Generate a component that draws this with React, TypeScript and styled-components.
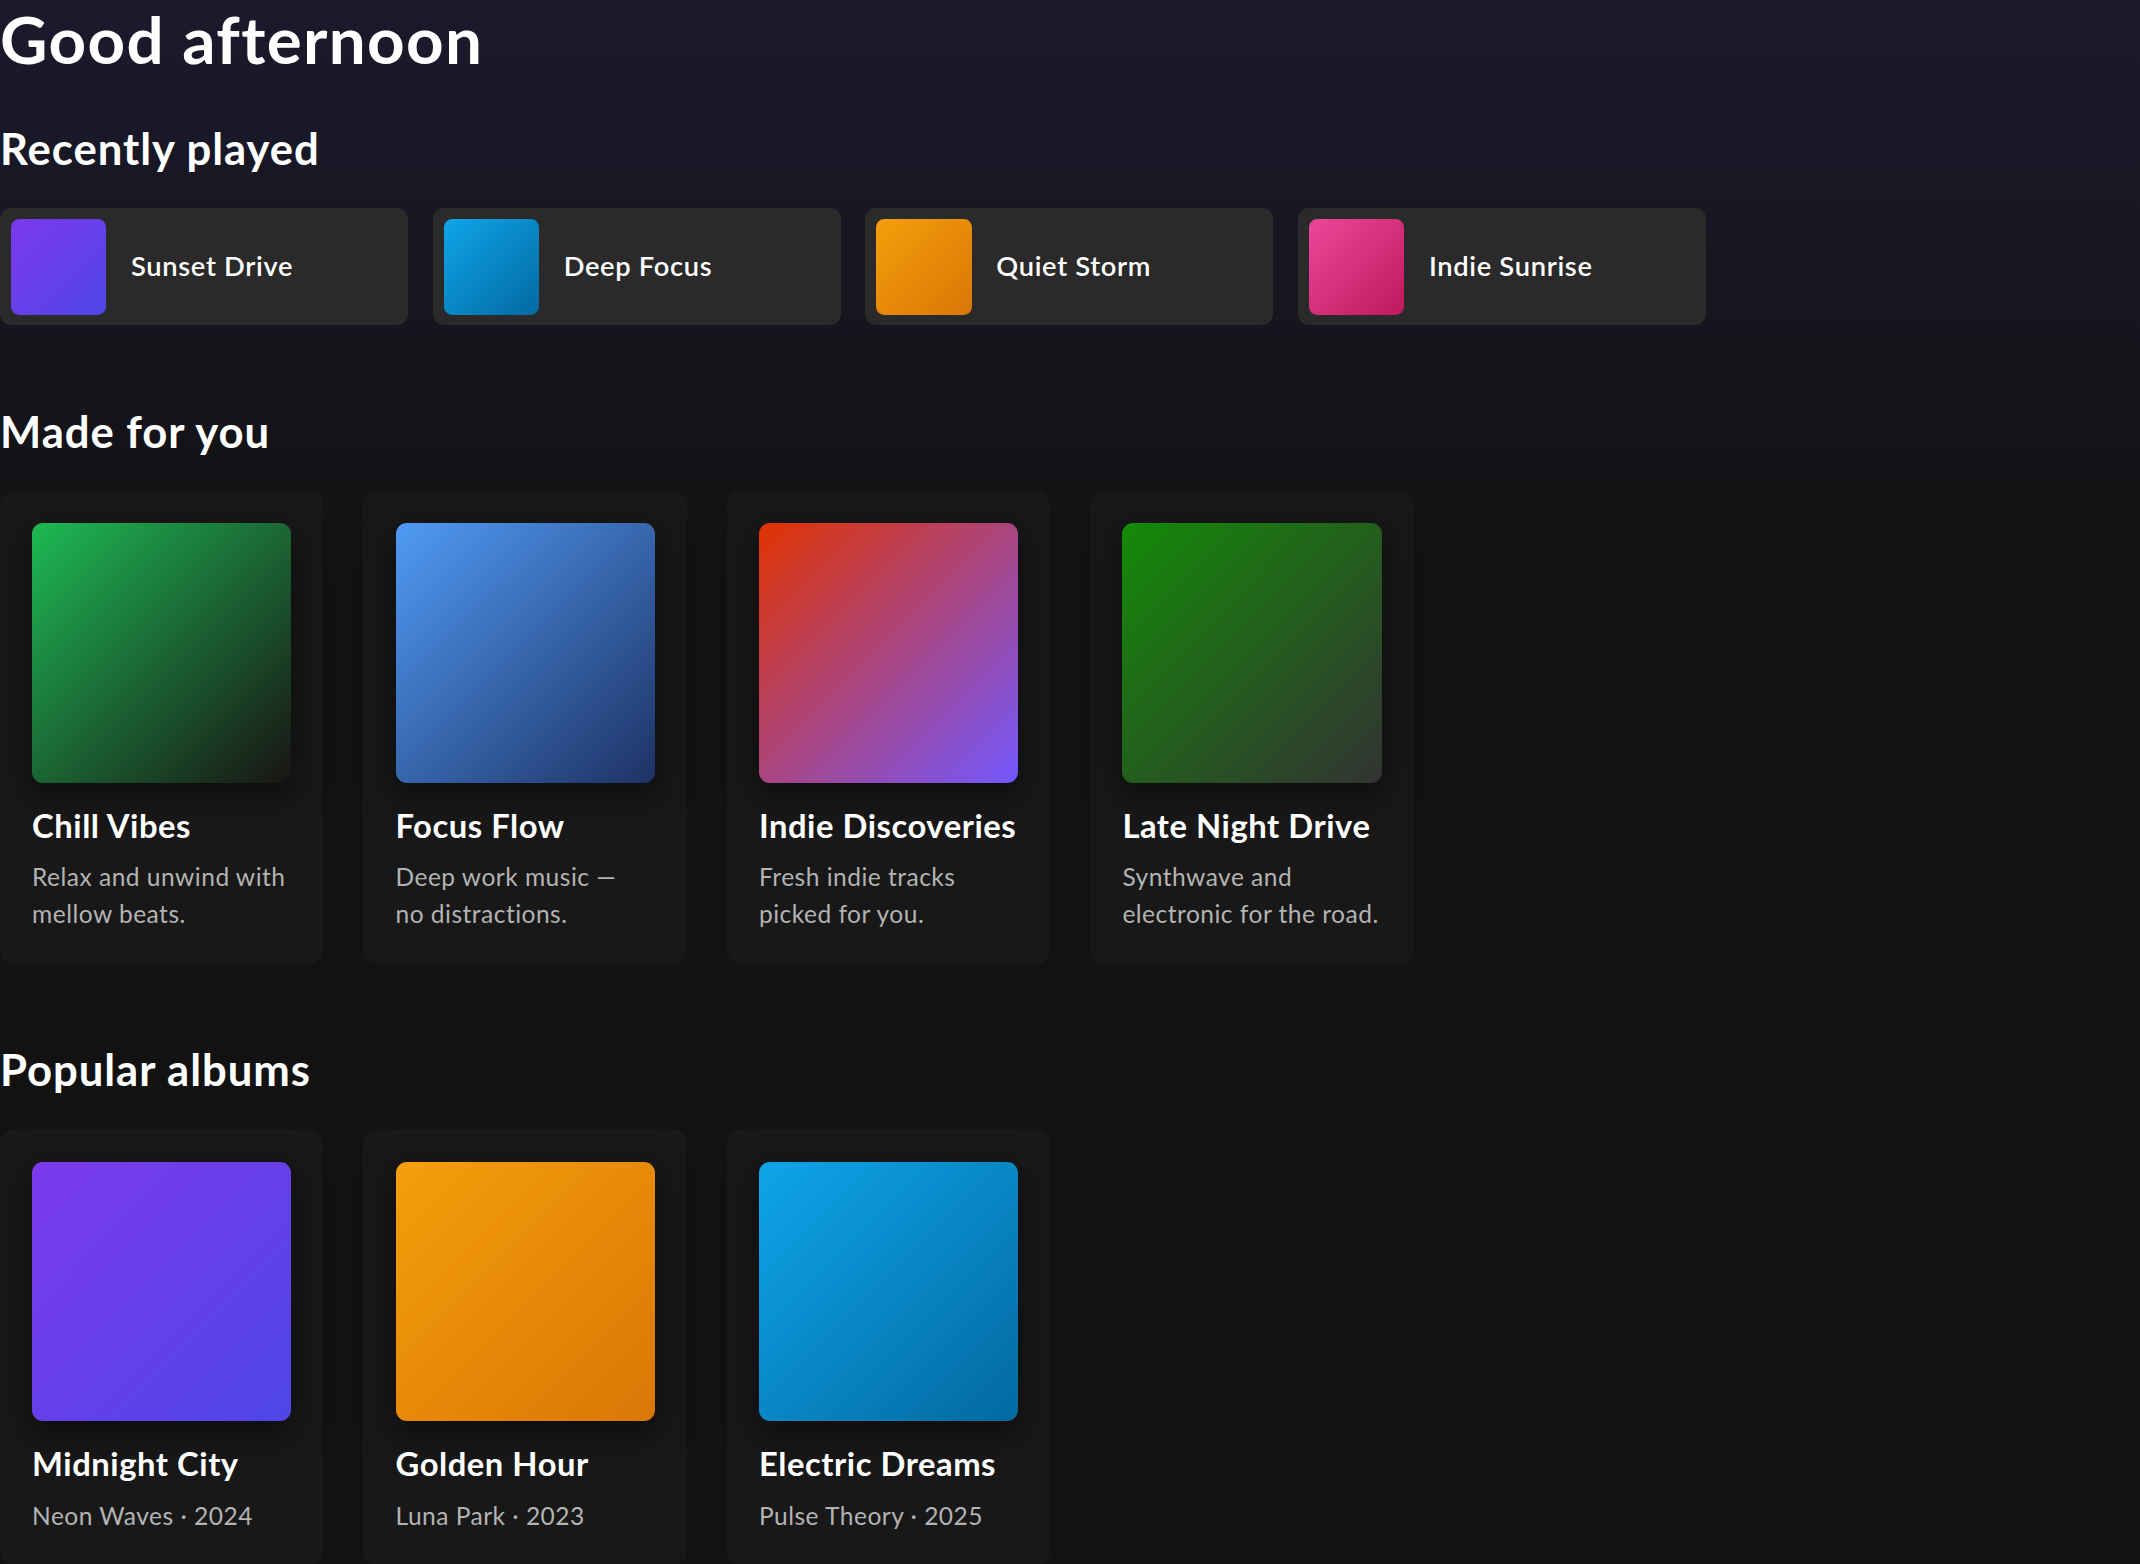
import React from 'react';
import styled, { createGlobalStyle } from 'styled-components';

const GlobalStyle = createGlobalStyle`
  html, body {
    margin: 0;
    padding: 0;
    background: #121212;
  }
  body {
    font-family: Lato, "Noto Sans", sans-serif;
    color: #ffffff;
    -webkit-font-smoothing: antialiased;
  }
  * { box-sizing: border-box; }
`;

const Page = styled.div`
  min-height: 100vh;
  overflow: hidden;
  background: linear-gradient(180deg, #1b1a2d 0px, #121212 580px);
`;

const Main = styled.main`
  zoom: 1.3648;
`;

const Greeting = styled.h1`
  margin: 0 0 32px;
  font-size: 48px;
  line-height: 1.2;
  font-weight: 700;
  letter-spacing: 1px;
`;

const Section = styled.section`
  margin-bottom: 58.2px;
`;

const SectionTitle = styled.h2`
  margin: 0 0 24.5px;
  font-size: 32px;
  line-height: 1.2;
  font-weight: 700;
  letter-spacing: 0.7px;
`;

const RecentGrid = styled.div`
  display: grid;
  grid-template-columns: repeat(4, 299px);
  gap: 18px;
`;

const RecentItem = styled.div`
  display: flex;
  align-items: center;
  gap: 18px;
  padding: 8px;
  background: #2a2a2a;
  border-radius: 8px;
`;

const Thumb = styled.div<{ $bg: string }>`
  width: 70px;
  height: 70px;
  flex-shrink: 0;
  border-radius: 6px;
  background: ${p => p.$bg};
`;

const RecentName = styled.span`
  font-size: 20px;
  font-weight: 600;
  line-height: 1.2;
  letter-spacing: 0.5px;
`;

const CardGrid = styled.div`
  display: grid;
  grid-template-columns: repeat(4, 237px);
  gap: 29.3px;
`;

const Card = styled.div`
  padding: 24px 23.5px 22.5px;
  background: #181818;
  border-radius: 10px;
`;

const Cover = styled.div<{ $bg: string }>`
  width: 190px;
  height: 190px;
  border-radius: 8px;
  background: ${p => p.$bg};
  box-shadow: 0 8px 24px rgba(0, 0, 0, 0.5);
`;

const CardTitle = styled.h3`
  margin: 16px 0 0;
  font-size: 24px;
  line-height: 1.3;
  font-weight: 700;
  letter-spacing: 0.4px;
`;

const CardText = styled.p`
  margin: 9px 0 0;
  font-size: 18px;
  line-height: 1.5;
  color: #b3b3b3;
  letter-spacing: 0.35px;
  white-space: pre-line;
`;

const grad = (a: string, b: string) => `linear-gradient(135deg, ${a}, ${b})`;

const recent = [
  { name: 'Sunset Drive', bg: grad('#7c3aed', '#4f46e5') },
  { name: 'Deep Focus', bg: grad('#0ea5e9', '#0369a1') },
  { name: 'Quiet Storm', bg: grad('#f59e0b', '#d97706') },
  { name: 'Indie Sunrise', bg: grad('#ec4899', '#be185d') },
];

const madeForYou = [
  { title: 'Chill Vibes', text: 'Relax and unwind with\nmellow beats.', bg: grad('#1db954', '#191414') },
  { title: 'Focus Flow', text: 'Deep work music —\nno distractions.', bg: grad('#509bf5', '#1e3264') },
  { title: 'Indie Discoveries', text: 'Fresh indie tracks\npicked for you.', bg: grad('#e13300', '#7358ff') },
  { title: 'Late Night Drive', text: 'Synthwave and\nelectronic for the road.', bg: grad('#148a08', '#333333') },
];

const albums = [
  { title: 'Midnight City', text: 'Neon Waves · 2024', bg: grad('#7c3aed', '#4f46e5') },
  { title: 'Golden Hour', text: 'Luna Park · 2023', bg: grad('#f59e0b', '#d97706') },
  { title: 'Electric Dreams', text: 'Pulse Theory · 2025', bg: grad('#0ea5e9', '#0369a1') },
];

const App = () => {
  return (
    <Page>
      <GlobalStyle />
      <Main>
        <Greeting>Good afternoon</Greeting>

        <Section>
          <SectionTitle>Recently played</SectionTitle>
          <RecentGrid>
            {recent.map(r => (
              <RecentItem key={r.name}>
                <Thumb $bg={r.bg} />
                <RecentName>{r.name}</RecentName>
              </RecentItem>
            ))}
          </RecentGrid>
        </Section>

        <Section>
          <SectionTitle>Made for you</SectionTitle>
          <CardGrid>
            {madeForYou.map(c => (
              <Card key={c.title}>
                <Cover $bg={c.bg} />
                <CardTitle>{c.title}</CardTitle>
                <CardText>{c.text}</CardText>
              </Card>
            ))}
          </CardGrid>
        </Section>

        <Section>
          <SectionTitle>Popular albums</SectionTitle>
          <CardGrid>
            {albums.map(a => (
              <Card key={a.title}>
                <Cover $bg={a.bg} />
                <CardTitle>{a.title}</CardTitle>
                <CardText>{a.text}</CardText>
              </Card>
            ))}
          </CardGrid>
        </Section>
      </Main>
    </Page>
  );
};

export default App;
